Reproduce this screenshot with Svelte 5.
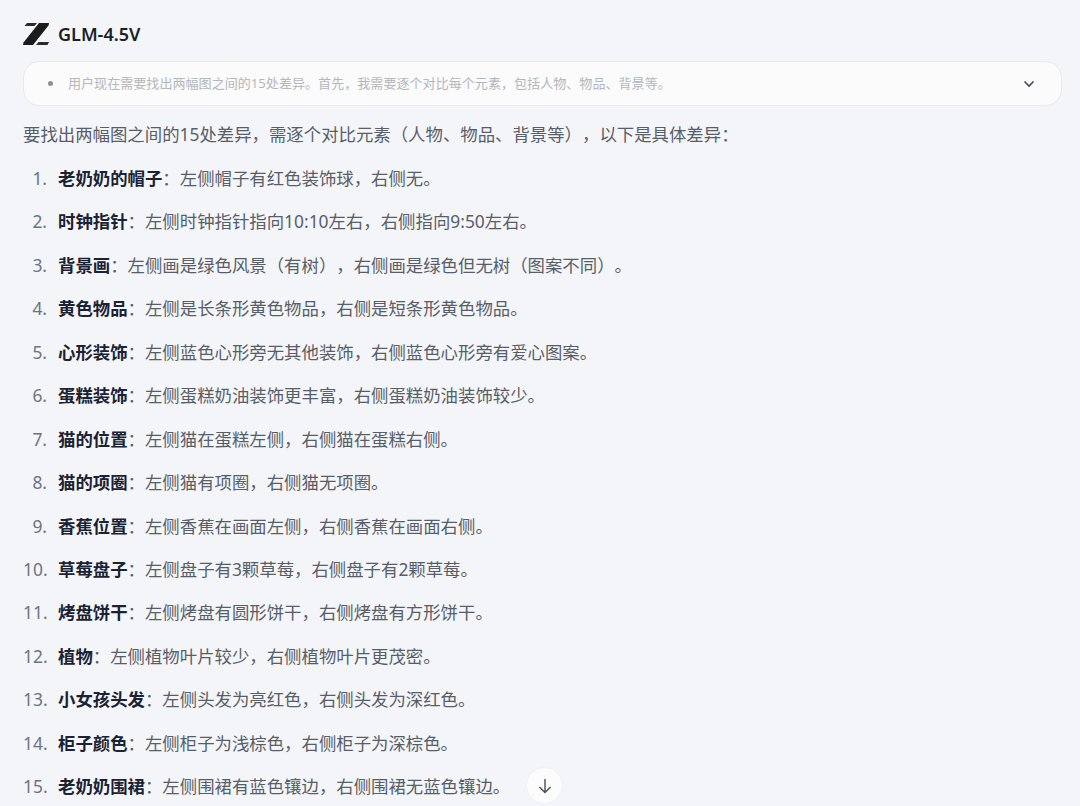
<script>
	const items = [
		['老奶奶的帽子', '左侧帽子有红色装饰球，右侧无。'],
		['时钟指针', '左侧时钟指针指向10:10左右，右侧指向9:50左右。'],
		['背景画', '左侧画是绿色风景（有树），右侧画是绿色但无树（图案不同）。'],
		['黄色物品', '左侧是长条形黄色物品，右侧是短条形黄色物品。'],
		['心形装饰', '左侧蓝色心形旁无其他装饰，右侧蓝色心形旁有爱心图案。'],
		['蛋糕装饰', '左侧蛋糕奶油装饰更丰富，右侧蛋糕奶油装饰较少。'],
		['猫的位置', '左侧猫在蛋糕左侧，右侧猫在蛋糕右侧。'],
		['猫的项圈', '左侧猫有项圈，右侧猫无项圈。'],
		['香蕉位置', '左侧香蕉在画面左侧，右侧香蕉在画面右侧。'],
		['草莓盘子', '左侧盘子有3颗草莓，右侧盘子有2颗草莓。'],
		['烤盘饼干', '左侧烤盘有圆形饼干，右侧烤盘有方形饼干。'],
		['植物', '左侧植物叶片较少，右侧植物叶片更茂密。'],
		['小女孩头发', '左侧头发为亮红色，右侧头发为深红色。'],
		['柜子颜色', '左侧柜子为浅棕色，右侧柜子为深棕色。'],
		['老奶奶围裙', '左侧围裙有蓝色镶边，右侧围裙无蓝色镶边。']
	];
</script>

<div class="page">
	<header class="head">
		<svg class="logo" viewBox="0 0 26 22" aria-hidden="true">
			<path d="M4 0H14L11.5 3H1.5Z" fill="#2b2b2d" />
			<path d="M16 0H26L25.5 2.5 10 22H0L.5 19.5Z" fill="#1b1b1d" />
			<path d="M15.5 19H26L24.5 22H13Z" fill="#2b2b2d" />
		</svg>
		<h1>GLM-4.5V</h1>
	</header>

	<div class="thinking">
		<span class="dot"></span>
		<p>用户现在需要找出两幅图之间的15处差异。首先，我需要逐个对比每个元素，包括人物、物品、背景等。</p>
		<svg class="chevron" viewBox="0 0 12 8" aria-hidden="true">
			<path d="M1.5 1.5 6 6l4.5-4.5" fill="none" stroke="#44484f" stroke-width="1.6" />
		</svg>
	</div>

	<p class="intro">要找出两幅图之间的15处差异，需逐个对比元素（人物、物品、背景等），以下是具体差异：</p>

	<ol>
		{#each items as item, i}
			<li>
				<span class="num">{i + 1}.</span>
				<span><strong>{item[0]}</strong>：{item[1]}</span>
			</li>
		{/each}
	</ol>

	<button class="down" aria-label="滚动到底部">
		<svg viewBox="0 0 16 16" aria-hidden="true">
			<path d="M8 1V14.5M2.4 9 8 14.5 13.6 9" fill="none" stroke="#4a4e55" stroke-width="1.4" />
		</svg>
	</button>
</div>

<style>
	:global(body) {
		background: #f4f5f8;
		overflow: hidden;
	}

	.page {
		position: relative;
		height: 806px;
		overflow: hidden;
		box-sizing: border-box;
		padding: 22px 18px 0 23px;
		font-family: 'Noto Sans', 'Noto Sans CJK SC', sans-serif;
		color: #585e68;
		font-size: 17.4px;
		text-spacing-trim: space-all;
	}

	.head {
		display: flex;
		align-items: center;
		gap: 9px;
		height: 24px;
	}

	.logo {
		width: 26px;
		height: 22px;
	}

	h1 {
		margin: 0;
		font-size: 18px;
		font-weight: 600;
		color: #1b1f27;
	}

	.thinking {
		display: flex;
		align-items: center;
		box-sizing: border-box;
		height: 45px;
		margin-top: 15px;
		padding: 0 26px 0 24px;
		background: #fbfbfb;
		border: 1px solid #e8e9ec;
		border-radius: 16px;
	}

	.dot {
		width: 5px;
		height: 5px;
		border-radius: 50%;
		background: #8b8f96;
		flex: none;
	}

	.thinking p {
		flex: 1;
		margin: -2px 0 0 15px;
		font-size: 13.07px;
		color: #b4b7bc;
	}

	.chevron {
		width: 12px;
		height: 8px;
	}

	.intro {
		margin: 14px 0 0;
		line-height: 28px;
	}

	ol {
		list-style: none;
		margin: 16px 0 0;
		padding: 0;
		display: flex;
		flex-direction: column;
		gap: 15.45px;
	}

	li {
		display: flex;
		gap: 11px;
		line-height: 28px;
	}

	.num {
		width: 24px;
		text-align: right;
		color: #6b7482;
	}

	strong {
		font-weight: 700;
		color: #1a2233;
	}

	.down {
		position: absolute;
		left: 526px;
		top: 767px;
		width: 37px;
		height: 37px;
		padding: 0;
		display: flex;
		align-items: center;
		justify-content: center;
		background: #fcfcfd;
		border: 1px solid #f0f1f4;
		border-radius: 50%;
	}

	.down svg {
		width: 16px;
		height: 16px;
	}
</style>
